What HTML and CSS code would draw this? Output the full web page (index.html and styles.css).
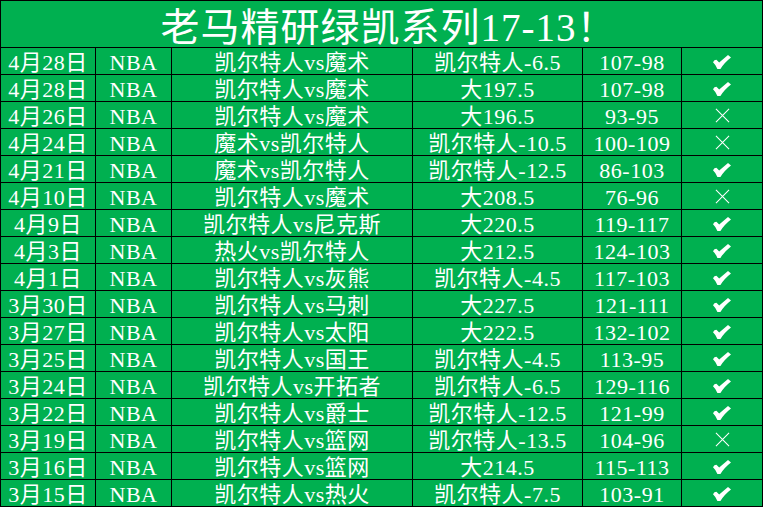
FILE: index.html
```html
<!DOCTYPE html>
<html lang="zh-CN">
<head>
<meta charset="utf-8">
<title>老马精研绿凯系列17-13！</title>
<link rel="stylesheet" href="styles.css">
</head>
<body>
<div class="sheet">
  <div class="title">老马精研绿凯系列17-13！</div>

  <div class="c">4月28日</div><div class="c">NBA</div><div class="c">凯尔特人vs魔术</div><div class="c">凯尔特人-6.5</div><div class="c">107-98</div><div class="c"><svg class="ok" viewBox="0 0 18 14"><path d="M0 7.2Q1.2 4.8 3.4 4.8L6.2 7.6L15 0L18 2.4Q10.8 8 7.4 14L4.4 14Q3 10 0 7.2Z"/></svg></div>
  <div class="c">4月28日</div><div class="c">NBA</div><div class="c">凯尔特人vs魔术</div><div class="c">大197.5</div><div class="c">107-98</div><div class="c"><svg class="ok" viewBox="0 0 18 14"><path d="M0 7.2Q1.2 4.8 3.4 4.8L6.2 7.6L15 0L18 2.4Q10.8 8 7.4 14L4.4 14Q3 10 0 7.2Z"/></svg></div>
  <div class="c">4月26日</div><div class="c">NBA</div><div class="c">凯尔特人vs魔术</div><div class="c">大196.5</div><div class="c">93-95</div><div class="c"><svg class="no" viewBox="0 0 16 16"><path d="M1 1L15 15M15 1L1 15"/></svg></div>
  <div class="c">4月24日</div><div class="c">NBA</div><div class="c">魔术vs凯尔特人</div><div class="c">凯尔特人-10.5</div><div class="c">100-109</div><div class="c"><svg class="no" viewBox="0 0 16 16"><path d="M1 1L15 15M15 1L1 15"/></svg></div>
  <div class="c">4月21日</div><div class="c">NBA</div><div class="c">魔术vs凯尔特人</div><div class="c">凯尔特人-12.5</div><div class="c">86-103</div><div class="c"><svg class="ok" viewBox="0 0 18 14"><path d="M0 7.2Q1.2 4.8 3.4 4.8L6.2 7.6L15 0L18 2.4Q10.8 8 7.4 14L4.4 14Q3 10 0 7.2Z"/></svg></div>
  <div class="c">4月10日</div><div class="c">NBA</div><div class="c">凯尔特人vs魔术</div><div class="c">大208.5</div><div class="c">76-96</div><div class="c"><svg class="no" viewBox="0 0 16 16"><path d="M1 1L15 15M15 1L1 15"/></svg></div>
  <div class="c">4月9日</div><div class="c">NBA</div><div class="c">凯尔特人vs尼克斯</div><div class="c">大220.5</div><div class="c">119-117</div><div class="c"><svg class="ok" viewBox="0 0 18 14"><path d="M0 7.2Q1.2 4.8 3.4 4.8L6.2 7.6L15 0L18 2.4Q10.8 8 7.4 14L4.4 14Q3 10 0 7.2Z"/></svg></div>
  <div class="c">4月3日</div><div class="c">NBA</div><div class="c">热火vs凯尔特人</div><div class="c">大212.5</div><div class="c">124-103</div><div class="c"><svg class="ok" viewBox="0 0 18 14"><path d="M0 7.2Q1.2 4.8 3.4 4.8L6.2 7.6L15 0L18 2.4Q10.8 8 7.4 14L4.4 14Q3 10 0 7.2Z"/></svg></div>
  <div class="c">4月1日</div><div class="c">NBA</div><div class="c">凯尔特人vs灰熊</div><div class="c">凯尔特人-4.5</div><div class="c">117-103</div><div class="c"><svg class="ok" viewBox="0 0 18 14"><path d="M0 7.2Q1.2 4.8 3.4 4.8L6.2 7.6L15 0L18 2.4Q10.8 8 7.4 14L4.4 14Q3 10 0 7.2Z"/></svg></div>
  <div class="c">3月30日</div><div class="c">NBA</div><div class="c">凯尔特人vs马刺</div><div class="c">大227.5</div><div class="c">121-111</div><div class="c"><svg class="ok" viewBox="0 0 18 14"><path d="M0 7.2Q1.2 4.8 3.4 4.8L6.2 7.6L15 0L18 2.4Q10.8 8 7.4 14L4.4 14Q3 10 0 7.2Z"/></svg></div>
  <div class="c">3月27日</div><div class="c">NBA</div><div class="c">凯尔特人vs太阳</div><div class="c">大222.5</div><div class="c">132-102</div><div class="c"><svg class="ok" viewBox="0 0 18 14"><path d="M0 7.2Q1.2 4.8 3.4 4.8L6.2 7.6L15 0L18 2.4Q10.8 8 7.4 14L4.4 14Q3 10 0 7.2Z"/></svg></div>
  <div class="c">3月25日</div><div class="c">NBA</div><div class="c">凯尔特人vs国王</div><div class="c">凯尔特人-4.5</div><div class="c">113-95</div><div class="c"><svg class="ok" viewBox="0 0 18 14"><path d="M0 7.2Q1.2 4.8 3.4 4.8L6.2 7.6L15 0L18 2.4Q10.8 8 7.4 14L4.4 14Q3 10 0 7.2Z"/></svg></div>
  <div class="c">3月24日</div><div class="c">NBA</div><div class="c">凯尔特人vs开拓者</div><div class="c">凯尔特人-6.5</div><div class="c">129-116</div><div class="c"><svg class="ok" viewBox="0 0 18 14"><path d="M0 7.2Q1.2 4.8 3.4 4.8L6.2 7.6L15 0L18 2.4Q10.8 8 7.4 14L4.4 14Q3 10 0 7.2Z"/></svg></div>
  <div class="c">3月22日</div><div class="c">NBA</div><div class="c">凯尔特人vs爵士</div><div class="c">凯尔特人-12.5</div><div class="c">121-99</div><div class="c"><svg class="ok" viewBox="0 0 18 14"><path d="M0 7.2Q1.2 4.8 3.4 4.8L6.2 7.6L15 0L18 2.4Q10.8 8 7.4 14L4.4 14Q3 10 0 7.2Z"/></svg></div>
  <div class="c">3月19日</div><div class="c">NBA</div><div class="c">凯尔特人vs篮网</div><div class="c">凯尔特人-13.5</div><div class="c">104-96</div><div class="c"><svg class="no" viewBox="0 0 16 16"><path d="M1 1L15 15M15 1L1 15"/></svg></div>
  <div class="c">3月16日</div><div class="c">NBA</div><div class="c">凯尔特人vs篮网</div><div class="c">大214.5</div><div class="c">115-113</div><div class="c"><svg class="ok" viewBox="0 0 18 14"><path d="M0 7.2Q1.2 4.8 3.4 4.8L6.2 7.6L15 0L18 2.4Q10.8 8 7.4 14L4.4 14Q3 10 0 7.2Z"/></svg></div>
  <div class="c">3月15日</div><div class="c">NBA</div><div class="c">凯尔特人vs热火</div><div class="c">凯尔特人-7.5</div><div class="c">103-91</div><div class="c"><svg class="ok" viewBox="0 0 18 14"><path d="M0 7.2Q1.2 4.8 3.4 4.8L6.2 7.6L15 0L18 2.4Q10.8 8 7.4 14L4.4 14Q3 10 0 7.2Z"/></svg></div>
</div>
</body>
</html>
```

FILE: styles.css
```css
html, body {
  margin: 0;
  padding: 0;
  background: #00b050;
}

.sheet {
  width: 763px;
  height: 507px;
  box-sizing: border-box;
  display: grid;
  grid-template-columns: 94px 75px 240px 169px 98px 80px;
  grid-template-rows: 46px repeat(17, 26px);
  gap: 1px;
  padding: 1px;
  background: #000;
  font-family: "Liberation Serif", "Noto Sans CJK SC", serif;
  color: #fff;
}

.title {
  grid-column: 1 / -1;
  background: #00b050;
  display: flex;
  align-items: center;
  justify-content: center;
  font-size: 39px;
  line-height: 1;
  padding-top: 6px;
  padding-left: 14px;
  box-sizing: border-box;
  letter-spacing: 1px;
}

.c {
  background: #00b050;
  display: flex;
  align-items: center;
  justify-content: center;
  font-size: 22px;
  font-weight: normal;
  letter-spacing: 0.5px;
  line-height: 1;
  padding-top: 3px;
  box-sizing: border-box;
  white-space: nowrap;
}

.ok {
  width: 18px;
  height: 14px;
  fill: #fff;
  margin-top: -1px;
}

.no {
  width: 15px;
  height: 15px;
  fill: none;
  stroke: #fff;
  stroke-width: 1.1;
  margin-top: -2px;
}
```
